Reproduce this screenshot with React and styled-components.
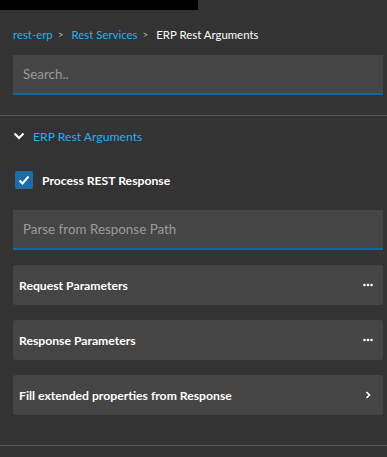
import styled, { createGlobalStyle } from 'styled-components';

const GlobalStyle = createGlobalStyle`
    html, body {
        margin: 0;
        padding: 0;
        background: #333333;
    }
    body {
        font-family: Lato, "Noto Sans", sans-serif;
        color: #ffffff;
    }
`;

const Page = styled.div`
    width: 387px;
    height: 457px;
    background: #333333;
    display: flex;
    flex-direction: column;
    overflow: hidden;
`;

const TopBar = styled.div`
    width: 198px;
    height: 10px;
    background: #000000;
`;

const Breadcrumbs = styled.nav`
    display: flex;
    align-items: center;
    gap: 5px;
    padding: 14px 13px 0;
    height: 20px;
    font-size: 11.4px;
`;

const Crumb = styled.a`
    color: ${({ $current }) => ($current ? '#ffffff' : '#27aef0')};
    text-decoration: none;
    cursor: pointer;
`;

const Sep = styled.span`
    color: #bbbbbb;
    font-size: 10px;
    padding: 0 3px 0 0;
`;

const Field = styled.input`
    box-sizing: border-box;
    width: 370px;
    height: 40px;
    margin: ${({ $top }) => $top}px 0 0 13px;
    padding: 0 10px;
    background: #454545;
    border: none;
    border-bottom: 2px solid #0f6a9c;
    color: #ffffff;
    font-family: Lato, "Noto Sans", sans-serif;
    font-size: 13.4px;
    outline: none;
    &::placeholder {
        color: #9a9a9a;
    }
`;

const Divider = styled.div`
    height: 1px;
    background: #555555;
    margin-top: ${({ $top }) => $top}px;
`;

const SectionHeader = styled.div`
    display: flex;
    align-items: center;
    gap: 8px;
    padding: 11px 0 0 13px;
    height: 18px;
    color: #27aef0;
    font-size: 12.2px;
    svg {
        width: 12px;
        height: 12px;
    }
`;

const CheckRow = styled.label`
    display: flex;
    align-items: center;
    gap: 9px;
    margin: 26px 0 0 15px;
    height: 18px;
    font-size: 12.2px;
    font-weight: 700;
    cursor: pointer;
`;

const CheckBox = styled.span`
    width: 18px;
    height: 18px;
    border-radius: 2px;
    background: #1a6ea5;
    display: flex;
    align-items: center;
    justify-content: center;
    svg {
        width: 12px;
        height: 12px;
    }
`;

const PanelList = styled.div`
    display: flex;
    flex-direction: column;
    gap: 15px;
    margin: 15px 4px 0 13px;
`;

const Panel = styled.div`
    height: 40px;
    border-radius: 3px;
    background: #454545;
    display: flex;
    align-items: center;
    justify-content: space-between;
    padding: 0 10px 0 6px;
    font-size: 12.2px;
    font-weight: 700;
    cursor: pointer;
    svg {
        width: 10px;
        height: 10px;
    }
`;

const Dots = () => (
    <svg viewBox="0 0 10 10">
        <circle cx="1.5" cy="5" r="1.3" fill="#fff" />
        <circle cx="5" cy="5" r="1.3" fill="#fff" />
        <circle cx="8.5" cy="5" r="1.3" fill="#fff" />
    </svg>
);

const Chevron = () => (
    <svg viewBox="0 0 10 10">
        <path d="M3.5 2 L6.5 5 L3.5 8" fill="none" stroke="#fff" strokeWidth="1.6" />
    </svg>
);

const panels = [
    { title: 'Request Parameters', icon: 'dots' },
    { title: 'Response Parameters', icon: 'dots' },
    { title: 'Fill extended properties from Response', icon: 'chevron' },
];

const App = () => (
    <Page>
        <GlobalStyle />
        <TopBar />
        <Breadcrumbs>
            <Crumb>rest-erp</Crumb>
            <Sep>&gt;</Sep>
            <Crumb>Rest Services</Crumb>
            <Sep>&gt;</Sep>
            <Crumb $current>ERP Rest Arguments</Crumb>
        </Breadcrumbs>
        <Field $top={11} placeholder="Search.." />
        <Divider $top={20} />
        <SectionHeader>
            <svg viewBox="0 0 12 12">
                <path d="M1.5 3.5 L6 8 L10.5 3.5" fill="none" stroke="#fff" strokeWidth="2.2" />
            </svg>
            <span>ERP Rest Arguments</span>
        </SectionHeader>
        <CheckRow>
            <CheckBox>
                <svg viewBox="0 0 12 12">
                    <path d="M1.5 6.5 L4.5 9.5 L10.5 2.5" fill="none" stroke="#fff" strokeWidth="2" />
                </svg>
            </CheckBox>
            <span>Process REST Response</span>
        </CheckRow>
        <Field $top={21} placeholder="Parse from Response Path" />
        <PanelList>
            {panels.map((p) => (
                <Panel key={p.title}>
                    <span>{p.title}</span>
                    {p.icon === 'dots' ? <Dots /> : <Chevron />}
                </Panel>
            ))}
        </PanelList>
        <Divider $top={30} />
    </Page>
);

export default App;
